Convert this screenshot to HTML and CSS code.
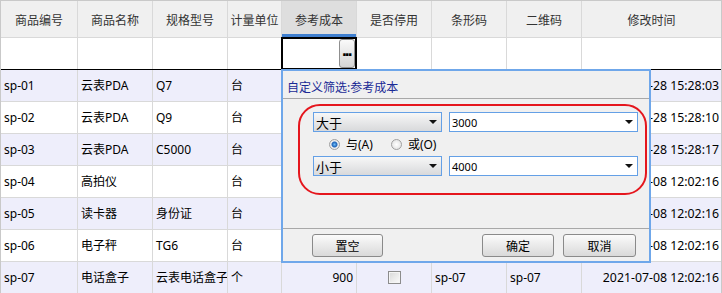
FILE: index.html
```html
<!DOCTYPE html>
<html lang="zh-CN">
<head>
  <meta charset="UTF-8">
  <title>商品列表</title>
  <link rel="stylesheet" href="styles.css">
</head>
<body>
  <div class="sheet">
    <div class="row head">
      <div class="cell">商品编号</div>
      <div class="cell">商品名称</div>
      <div class="cell">规格型号</div>
      <div class="cell">计量单位</div>
      <div class="cell sorted">参考成本</div>
      <div class="cell">是否停用</div>
      <div class="cell">条形码</div>
      <div class="cell">二维码</div>
      <div class="cell">修改时间</div>
    </div>
    <div class="row filter">
      <div class="cell"></div>
      <div class="cell"></div>
      <div class="cell"></div>
      <div class="cell"></div>
      <div class="cell editing"><span class="more">...</span></div>
      <div class="cell"></div>
      <div class="cell"></div>
      <div class="cell"></div>
      <div class="cell"></div>
    </div>
    <!-- 被弹窗挡住的单元格留空 -->
    <div class="row odd">
      <div class="cell">sp-01</div><div class="cell">云表PDA</div><div class="cell">Q7</div><div class="cell">台</div>
      <div class="cell"></div><div class="cell center"><span class="check"></span></div>
      <div class="cell"></div><div class="cell"></div><div class="cell time">2021-06-28 15:28:03</div>
    </div>
    <div class="row">
      <div class="cell">sp-02</div><div class="cell">云表PDA</div><div class="cell">Q9</div><div class="cell">台</div>
      <div class="cell"></div><div class="cell center"><span class="check"></span></div>
      <div class="cell"></div><div class="cell"></div><div class="cell time">2021-06-28 15:28:10</div>
    </div>
    <div class="row odd">
      <div class="cell">sp-03</div><div class="cell">云表PDA</div><div class="cell">C5000</div><div class="cell">台</div>
      <div class="cell"></div><div class="cell center"><span class="check"></span></div>
      <div class="cell"></div><div class="cell"></div><div class="cell time">2021-06-28 15:28:17</div>
    </div>
    <div class="row">
      <div class="cell">sp-04</div><div class="cell">高拍仪</div><div class="cell"></div><div class="cell">台</div>
      <div class="cell"></div><div class="cell center"><span class="check"></span></div>
      <div class="cell"></div><div class="cell"></div><div class="cell time">2021-07-08 12:02:16</div>
    </div>
    <div class="row odd">
      <div class="cell">sp-05</div><div class="cell">读卡器</div><div class="cell">身份证</div><div class="cell">台</div>
      <div class="cell"></div><div class="cell center"><span class="check"></span></div>
      <div class="cell"></div><div class="cell"></div><div class="cell time">2021-07-08 12:02:16</div>
    </div>
    <div class="row">
      <div class="cell">sp-06</div><div class="cell">电子秤</div><div class="cell">TG6</div><div class="cell">台</div>
      <div class="cell"></div><div class="cell center"><span class="check"></span></div>
      <div class="cell"></div><div class="cell"></div><div class="cell time">2021-07-08 12:02:16</div>
    </div>
    <div class="row odd">
      <div class="cell">sp-07</div><div class="cell">电话盒子</div><div class="cell">云表电话盒子</div><div class="cell">个</div>
      <div class="cell num">900</div><div class="cell center"><span class="check"></span></div>
      <div class="cell">sp-07</div><div class="cell">sp-07</div><div class="cell time">2021-07-08 12:02:16</div>
    </div>

    <!-- 自定义筛选弹窗 -->
    <div class="dialog">
      <div class="dlg-title">自定义筛选:参考成本</div>
      <div class="dlg-body">
        <div class="cond">
          <div class="line">
            <div class="select">大于</div>
            <div class="input">3000</div>
          </div>
          <div class="radios">
            <span class="opt"><span class="radio on"></span>与(A)</span>
            <span class="opt"><span class="radio"></span>或(O)</span>
          </div>
          <div class="line">
            <div class="select">小于</div>
            <div class="input">4000</div>
          </div>
        </div>
      </div>
      <div class="dlg-foot">
        <span class="btn clear">置空</span>
        <span class="btn ok">确定</span>
        <span class="btn cancel">取消</span>
      </div>
    </div>
  </div>
</body>
</html>
```

FILE: styles.css
```css
body {
  margin: 0;
  font-family: "Noto Sans", "Noto Sans CJK SC", sans-serif;
  font-size: 12px;
  color: #000;
  background: #fff;
}
.sheet {
  position: relative;
  width: 722px;
  height: 293px;
  box-sizing: border-box;
  border: 1px solid #c9c9c9;
  border-bottom: 0;
  overflow: hidden;
}
.row {
  display: grid;
  grid-template-columns: 77px 75px 75px 54px 75px 75px 75px 75px 139px;
  height: 32px;
  box-sizing: border-box;
  border-bottom: 1px solid #d9d9d9;
}
.row.odd {
  background: #eeeefb;
}
.cell {
  display: flex;
  align-items: center;
  padding: 0 3px;
  border-right: 1px solid #d9d9d9;
  white-space: nowrap;
  overflow: hidden;
  line-height: 16px;
}
.cell:last-child {
  border-right: 0;
}
.head {
  height: 37px;
  background: #f0f0f0;
  color: #333;
}
.head .cell {
  justify-content: center;
  padding-top: 3px;
}
.head .sorted {
  position: relative;
  background: #dedede;
}
.head .sorted::after {
  content: '';
  position: absolute;
  left: 0;
  right: 0;
  bottom: 0;
  height: 3px;
  background: #3f7fcf;
}
.filter {
  border-bottom-color: #000;
}
.editing {
  position: relative;
  overflow: visible;
  justify-content: flex-end;
  padding: 0 1px 0 0;
}
.editing::before {
  content: '';
  position: absolute;
  left: -1px;
  top: -1px;
  right: -1px;
  bottom: -1px;
  border: 2px solid #000;
}
.more {
  position: relative;
  z-index: 1;
  width: 16px;
  height: 29px;
  box-sizing: border-box;
  border: 1px solid #8f8f8f;
  border-radius: 3px;
  background: linear-gradient(#fafafa, #d4d4d4);
  font-family: "DejaVu Sans", sans-serif;
  font-weight: bold;
  font-size: 14px;
  line-height: 22px;
  text-align: center;
  letter-spacing: -2.5px;
  text-indent: -2px;
}
.num {
  justify-content: flex-end;
}
.center {
  justify-content: center;
}
.time {
  justify-content: flex-end;
  padding-right: 2px;
  font-size: 12.3px;
}
.check {
  width: 13px;
  height: 13px;
  box-sizing: border-box;
  border: 1px solid #8c8c8c;
  background: linear-gradient(135deg, #d8d8d8, #fbfbfb);
  box-shadow: inset 0 0 0 1px #f4f4f4;
}

/* 弹窗 */
.dialog {
  position: absolute;
  left: 280px;
  top: 68px;
  width: 370px;
  height: 194px;
  box-sizing: border-box;
  border: 2px solid #6fa7ea;
  background: #f0f0f0;
  display: flex;
  flex-direction: column;
}
.dlg-title {
  height: 28px;
  box-sizing: border-box;
  padding: 9px 0 0 4px;
  line-height: 16px;
  border-bottom: 1px solid #a8a8a8;
  color: #1a2a95;
}
.dlg-body {
  height: 130px;
  box-sizing: border-box;
  padding: 5px 0 0 15px;
  border-bottom: 1px solid #a8a8a8;
}
.cond {
  width: 349px;
  height: 91px;
  box-sizing: border-box;
  padding: 6px 0 0 13px;
  border: 2px solid #e5161d;
  border-radius: 22px;
}
.line {
  display: flex;
  gap: 7px;
  height: 20px;
}
.select,
.input {
  position: relative;
  height: 20px;
  box-sizing: border-box;
  border: 1px solid #64a0e6;
  display: flex;
  align-items: center;
  padding-left: 2px;
}
.select {
  width: 129px;
  font-size: 13px;
  background: linear-gradient(#f7f7f7, #d8d9db);
}
.input {
  width: 189px;
  font-size: 11px;
  background: #fff;
}
.select::after,
.input::after {
  content: '';
  position: absolute;
  top: 7px;
  right: 4px;
  border-left: 4px solid transparent;
  border-right: 4px solid transparent;
  border-top: 4px solid #111;
}
.radios {
  height: 24px;
  display: flex;
  align-items: center;
  padding-left: 16px;
}
.opt {
  display: flex;
  align-items: center;
  gap: 6px;
  margin-right: 18px;
}
.radio {
  width: 11px;
  height: 11px;
  box-sizing: border-box;
  border: 1px solid #a0a0a0;
  border-radius: 50%;
  background: radial-gradient(circle, #fff 0, #dcdcdc 100%);
}
.radio.on {
  background: radial-gradient(circle, #6dbcf7 0, #1f63b8 2.5px, #f2f2f2 3.5px, #d4d4d4 100%);
}
.dlg-foot {
  flex: 1;
  display: flex;
  align-items: flex-start;
  gap: 9px;
  padding: 5px 13px 0 29px;
}
.btn {
  width: 72px;
  height: 23px;
  box-sizing: border-box;
  border: 1px solid #8a8a8a;
  border-radius: 3px;
  background: linear-gradient(#fbfbfb, #d9d9d9);
  display: flex;
  align-items: center;
  justify-content: center;
}
.btn.clear {
  width: 71px;
  margin-right: auto;
}
.btn.cancel {
  width: 73px;
}
```
